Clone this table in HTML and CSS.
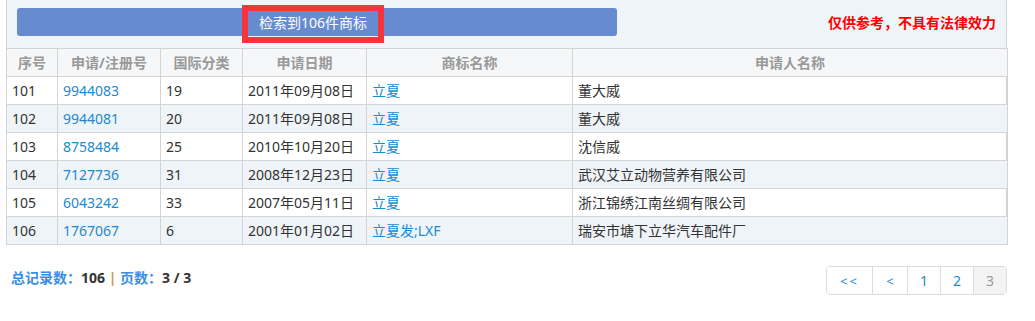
FILE: index.html
```html
<!DOCTYPE html>
<html lang="zh">
<head>
<meta charset="utf-8">
<link rel="stylesheet" href="styles.css">
</head>
<body>
<div class="panel">
  <div class="top">
    <div class="bar"><span class="count">检索到106件商标</span></div>
    <div class="notice">仅供参考，不具有法律效力</div>
  </div>
  <table class="grid">
    <colgroup>
      <col class="c1"><col class="c2"><col class="c3"><col class="c4"><col class="c5"><col class="c6">
    </colgroup>
    <thead>
      <tr><th>序号</th><th>申请/注册号</th><th>国际分类</th><th>申请日期</th><th>商标名称</th><th>申请人名称</th></tr>
    </thead>
    <tbody>
      <tr><td>101</td><td><a>9944083</a></td><td>19</td><td>2011年09月08日</td><td><a>立夏</a></td><td>董大威</td></tr>
      <tr><td>102</td><td><a>9944081</a></td><td>20</td><td>2011年09月08日</td><td><a>立夏</a></td><td>董大威</td></tr>
      <tr><td>103</td><td><a>8758484</a></td><td>25</td><td>2010年10月20日</td><td><a>立夏</a></td><td>沈信威</td></tr>
      <tr><td>104</td><td><a>7127736</a></td><td>31</td><td>2008年12月23日</td><td><a>立夏</a></td><td>武汉艾立动物营养有限公司</td></tr>
      <tr><td>105</td><td><a>6043242</a></td><td>33</td><td>2007年05月11日</td><td><a>立夏</a></td><td>浙江锦绣江南丝绸有限公司</td></tr>
      <tr><td>106</td><td><a>1767067</a></td><td>6</td><td>2001年01月02日</td><td><a>立夏发;LXF</a></td><td>瑞安市塘下立华汽车配件厂</td></tr>
    </tbody>
  </table>
</div>
<div class="footer">
  <div class="summary"><span class="lbl">总记录数：</span><b>106</b> <span class="sep">|</span> <span class="lbl">页数：</span><b>3 / 3</b></div>
  <div class="pager">
    <a class="pg w1">&lt;&lt;</a><a class="pg w2">&lt;</a><a class="pg w3">1</a><a class="pg w3">2</a><span class="pg w3 cur">3</span>
  </div>
</div>
</body>
</html>
```

FILE: styles.css
```css
html, body {
  margin: 0;
  padding: 0;
  background: #fff;
}
body {
  font-family: "Noto Sans", "Noto Sans CJK SC", sans-serif;
  font-size: 14px;
  color: #333;
}
.panel {
  margin-left: 6px;
  width: 999px;
  border-left: 1px solid #d4d4d4;
  border-right: 1px solid #d4d4d4;
}
.top {
  height: 48px;
  background: #eff4f8;
  display: flex;
  align-items: flex-start;
  justify-content: space-between;
  padding: 0 10px 0 10px;
  box-sizing: border-box;
}
.bar {
  margin-top: 8px;
  width: 600px;
  height: 28px;
  background: #668bcf;
  border-radius: 3px;
  display: flex;
  justify-content: center;
  align-items: flex-start;
}
.count {
  position: relative;
  top: -3px;
  margin-left: -8px;
  height: 38px;
  box-sizing: border-box;
  line-height: 24px;
  border: 6px solid #f4363c;
  padding: 0 11px;
  color: #fff;
  font-size: 14px;
  white-space: nowrap;
}
.notice {
  margin-top: 12px;
  color: #f00;
  font-weight: bold;
  font-size: 14px;
}
.grid {
  width: 1001px;
  margin-left: -1px;
  border-collapse: collapse;
  table-layout: fixed;
}
.c1 { width: 51px; }
.c2 { width: 103px; }
.c3 { width: 82px; }
.c4 { width: 124px; }
.c5 { width: 206px; }
.c6 { width: 435px; }
.grid th, .grid td {
  border: 1px solid #d4d4d4;
  height: 28px;
  box-sizing: border-box;
  padding: 0 5px;
  white-space: nowrap;
  line-height: 20px;
}
.grid th {
  background: #f5f7f8;
  color: #999;
  font-weight: bold;
  text-align: center;
}
.grid td {
  text-align: left;
  color: #333;
}
.grid tbody tr:nth-child(even) td {
  background: #eff4f8;
}
.grid a {
  color: #1b8ad0;
  text-decoration: none;
}
.footer {
  display: flex;
  justify-content: space-between;
  align-items: center;
  padding: 21px 28px 0 11px;
}
.summary {
  font-size: 14px;
  margin-top: -8px;
}
.summary .lbl {
  color: #3a8ee6;
  font-weight: bold;
}
.summary b {
  color: #333;
}
.summary .sep {
  color: #d19a4a;
  font-weight: bold;
}
.pager {
  display: flex;
  border: 1px solid #dcdcdc;
  border-radius: 4px;
  overflow: hidden;
  height: 29px;
  box-sizing: border-box;
}
.pg {
  display: flex;
  align-items: center;
  justify-content: center;
  color: #1b8ad0;
  font-size: 14px;
  border-left: 1px solid #dcdcdc;
  background: #fff;
  box-sizing: border-box;
  flex: none;
}
.pg:first-child { border-left: none; }
.w1 { width: 45px; letter-spacing: 2px; font-size: 13px; }
.w2 { width: 35px; font-size: 13px; }
.w3 { width: 33px; }
.cur {
  background: #f3f3f3;
  color: #999;
}
```
